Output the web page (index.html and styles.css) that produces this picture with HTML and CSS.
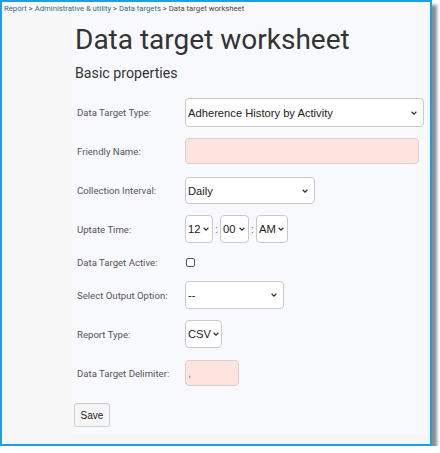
FILE: index.html
```html
<!DOCTYPE html>
<html lang="en">
<head>
  <meta charset="UTF-8" />
  <title>Data target worksheet</title>
  <link rel="stylesheet" href="styles.css">
</head>
<body>
  <div class="frame">
    <div class="crumbs">
      <a href="#">Report</a> &gt; <a href="#">Administrative &amp; utility</a> &gt; <a href="#">Data targets</a> &gt; <span>Data target worksheet</span>
    </div>

    <div class="page">
      <div class="gutter"></div>
      <main class="panel">
        <h1>Data target worksheet</h1>
        <h2>Basic properties</h2>

        <div class="form">
          <div class="row r-type">
            <label>Data Target Type:</label>
            <div class="sel w-type"><span>Adherence History by Activity</span><svg viewBox="0 0 6 4"><path d="M0.6 0.8 L3 3.1 L5.4 0.8" /></svg></div>
          </div>

          <div class="row r-name">
            <label>Friendly Name:</label>
            <div class="txt w-name"></div>
          </div>

          <div class="row r-interval">
            <label>Collection Interval:</label>
            <div class="sel w-interval"><span>Daily</span><svg viewBox="0 0 6 4"><path d="M0.6 0.8 L3 3.1 L5.4 0.8" /></svg></div>
          </div>

          <div class="row r-time">
            <label>Uptate Time:</label>
            <div class="time">
              <div class="sel small w-hh"><span>12</span><svg viewBox="0 0 6 4"><path d="M0.6 0.8 L3 3.1 L5.4 0.8" /></svg></div>
              <span class="colon">:</span>
              <div class="sel small w-mm"><span>00</span><svg viewBox="0 0 6 4"><path d="M0.6 0.8 L3 3.1 L5.4 0.8" /></svg></div>
              <span class="colon">:</span>
              <div class="sel small w-ampm"><span>AM</span><svg viewBox="0 0 6 4"><path d="M0.6 0.8 L3 3.1 L5.4 0.8" /></svg></div>
            </div>
          </div>

          <div class="row r-active">
            <label>Data Target Active:</label>
            <div class="check"></div>
          </div>

          <div class="row r-output">
            <label>Select Output Option:</label>
            <div class="sel w-output"><span>--</span><svg viewBox="0 0 6 4"><path d="M0.6 0.8 L3 3.1 L5.4 0.8" /></svg></div>
          </div>

          <div class="row r-report">
            <label>Report Type:</label>
            <div class="sel small w-csv"><span>CSV</span><svg viewBox="0 0 6 4"><path d="M0.6 0.8 L3 3.1 L5.4 0.8" /></svg></div>
          </div>

          <div class="row r-delim">
            <label>Data Target Delimiter:</label>
            <div class="txt w-delim">,</div>
          </div>
        </div>

        <button class="save">Save</button>
      </main>
    </div>
  </div>
</body>
</html>
```

FILE: styles.css
```css
body {
  margin: 0;
  background: #fff;
  font-family: Roboto, 'Liberation Sans', sans-serif;
}
.frame {
  width: 428px;
  height: 442px;
  border: 2px solid #1ba1e2;
  background: #f6f6f7;
  box-shadow: 5px 5px 3px rgba(0,0,0,0.45);
  display: flex;
  flex-direction: column;
}
.crumbs {
  height: 14px;
  line-height: 14px;
  padding-left: 2px;
  font-size: 7.7px;
  color: #444;
  background: #f9f9fb;
  white-space: nowrap;
}
.crumbs a {
  color: #2b6b8f;
  text-decoration: none;
}
.page {
  display: flex;
  height: 419px;
}
.gutter {
  width: 70px;
}
.panel {
  flex: 1;
  background: #f8f9fd;
  padding-left: 3px;
}
h1 {
  margin: 10px 0 0;
  font-size: 28px;
  line-height: 28px;
  font-weight: 400;
  color: #333;
}
h2 {
  margin: 12px 0 0;
  font-size: 14.2px;
  line-height: 14.2px;
  font-weight: 400;
  color: #333;
}
.form {
  margin-top: 18px;
  display: flex;
  flex-direction: column;
  gap: 11px;
}
.row {
  display: flex;
  align-items: center;
}
.row label {
  width: 108px;
  padding-left: 2px;
  font-size: 9.6px;
  color: #555;
}
.r-type { height: 29px; }
.r-name { height: 28px; align-items: flex-start; }
.r-name label { align-self: center; margin-top: -2px; }
.r-interval { height: 27px; }
.r-time { height: 28px; }
.r-active { height: 16px; }
.r-output { height: 28px; }
.r-report { height: 29px; align-items: flex-start; }
.r-report label { align-self: center; margin-top: -1px; }
.r-delim { height: 26px; }

.sel {
  box-sizing: border-box;
  height: 28px;
  display: flex;
  align-items: center;
  justify-content: space-between;
  padding: 0 6px 0 2px;
  background: #fff;
  border: 1px solid #c9c9c9;
  border-radius: 4px;
  font-family: 'Liberation Sans', Arial, sans-serif;
  font-size: 11.2px;
  color: #222;
}
.sel svg {
  width: 6px;
  height: 4px;
  flex: none;
}
.sel path {
  fill: none;
  stroke: #333;
  stroke-width: 1.3;
}
.sel.small {
  padding-right: 3px;
}
.sel.small svg {
  margin-left: 2px;
}
.w-type { width: 239px; height: 29px; }
.w-interval { width: 130px; height: 27px; }
.w-hh { width: 28px; }
.w-mm { width: 29px; }
.w-ampm { width: 32px; }
.w-output { width: 99px; }
.w-csv { width: 37px; }

.time {
  display: flex;
  align-items: center;
}
.colon {
  width: 7px;
  text-align: center;
  font-size: 10px;
  color: #666;
}

.txt {
  box-sizing: border-box;
  height: 26px;
  line-height: 24px;
  padding-left: 2px;
  background: #fde4df;
  border: 1px solid #e2cdc9;
  border-radius: 4px;
  font-family: 'Liberation Sans', Arial, sans-serif;
  font-size: 11px;
  color: #888;
}
.w-name { width: 234px; }
.w-delim { width: 54px; }

.check {
  box-sizing: border-box;
  width: 9px;
  height: 9px;
  margin-left: 1px;
  margin-top: 1px;
  background: #fff;
  border: 1px solid #555;
  border-radius: 2px;
}

.save {
  margin: 17px 0 0 -1px;
  width: 36px;
  height: 24px;
  padding: 0;
  background: #f6f6f6;
  border: 1px solid #cfcfcf;
  border-radius: 3px;
  font-family: 'Liberation Sans', Arial, sans-serif;
  font-size: 10px;
  color: #222;
}
```
